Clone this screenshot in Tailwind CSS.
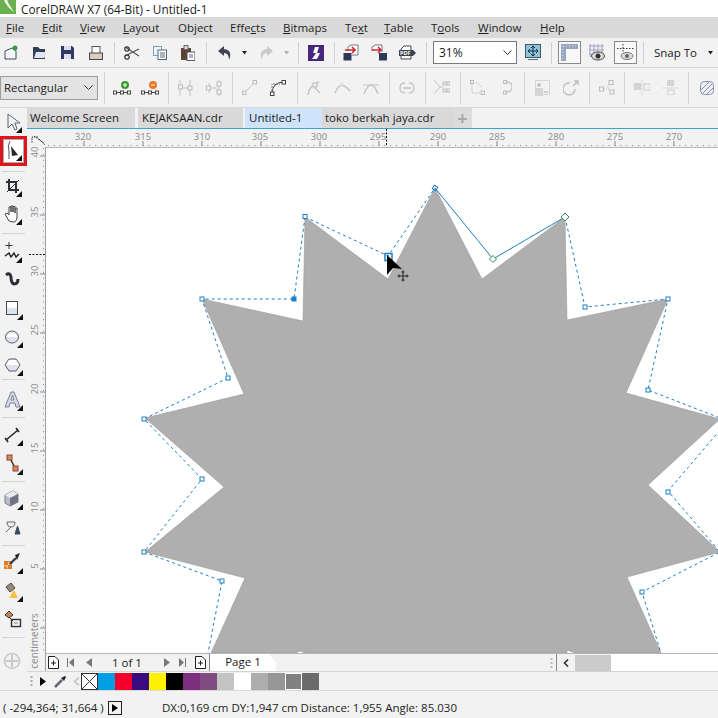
<!DOCTYPE html>
<html>
<head>
<meta charset="utf-8">
<title>CoreDRAW X7</title>
<script src="https://cdn.jsdelivr.net/npm/@tailwindcss/browser@4"></script>
</head>
<body class="m-0">
<div class="w-[718px] h-[718px] overflow-hidden flex flex-col bg-[#f2f2f2] text-[#1a1a1a] text-[11.5px] font-['Open_Sans',sans-serif]">

    <!-- Title bar -->
    <div class="h-[17px] shrink-0 bg-white flex items-center">
        <svg class="w-[16px] h-[14px] self-start" viewBox="0 0 16 14"><rect width="16" height="14" fill="#6ab04c"/><path d="M4 0 Q7 7 14 12 Q9 5 7 0Z" fill="#fff"/></svg>
        <span class="ml-[5px] text-[11.8px] leading-[14px]">CorelDRAW X7 (64-Bit) - Untitled-1</span>
    </div>

    <!-- Menu bar -->
    <div class="h-[21px] shrink-0 bg-[#d9d9d9] flex items-center pl-[6px] text-[11.5px] text-[#222]">
        <span class="w-[36px]"><u>F</u>ile</span>
        <span class="w-[38px]"><u>E</u>dit</span>
        <span class="w-[43px]"><u>V</u>iew</span>
        <span class="w-[55px]"><u>L</u>ayout</span>
        <span class="w-[52px]">Ob<u>j</u>ect</span>
        <span class="w-[53px]">Effe<u>c</u>ts</span>
        <span class="w-[62px]"><u>B</u>itmaps</span>
        <span class="w-[39px]">Te<u>x</u>t</span>
        <span class="w-[47px]"><u>T</u>able</span>
        <span class="w-[47px]">T<u>o</u>ols</span>
        <span class="w-[62px]"><u>W</u>indow</span>
        <span><u>H</u>elp</span>
    </div>

    <!-- Standard toolbar -->
    <div class="h-[30px] shrink-0 flex items-center border-b border-[#d4d4d4]">
        <svg class="ml-[4px] w-[14px] h-[16px]" viewBox="0 0 14 16"><path d="M1 6 L8 3 L12 6 V14 H1Z" fill="#f7f7f7" stroke="#3d4a5c"/><circle cx="11" cy="3" r="2.5" fill="#2e9e3e"/></svg>
        <svg class="ml-[14px] w-[15px] h-[14px]" viewBox="0 0 15 14"><path d="M1 1 H6 L8 3 H13 V13 H1Z" fill="#2f3f58"/><path d="M2 12 L4 6 H14.5 L12.5 12Z" fill="#dfe5ee"/></svg>
        <svg class="ml-[14px] w-[13px] h-[13px]" viewBox="0 0 13 13"><path d="M0 0 H11 L13 2 V13 H0Z" fill="#2c3a63"/><rect x="3" y="0" width="7" height="4" fill="#dde"/><rect x="3" y="8" width="7" height="5" fill="#dde"/></svg>
        <svg class="ml-[15px] w-[14px] h-[14px]" viewBox="0 0 14 14"><rect x="3" y="0.5" width="8" height="8" fill="#fff" stroke="#556"/><rect x="0.5" y="7" width="13" height="6.5" fill="#d8d0b8" stroke="#445"/></svg>
        <div class="ml-[11px] w-px h-[22px] bg-[#d0d0d0]"></div>
        <svg class="ml-[9px] w-[16px] h-[14px]" viewBox="0 0 16 14"><path d="M1 1 L15 10 M15 3 L1 10" stroke="#555" stroke-width="1.3" fill="none"/><circle cx="3" cy="3" r="2.2" fill="none" stroke="#333" stroke-width="1.2"/><circle cx="3" cy="11" r="2.2" fill="none" stroke="#333" stroke-width="1.2"/></svg>
        <svg class="ml-[13px] w-[14px] h-[14px]" viewBox="0 0 14 14"><rect x="0.5" y="0.5" width="8" height="9" fill="#eef3f7" stroke="#7fa0b8"/><rect x="5" y="4" width="8.5" height="9.5" fill="#fff" stroke="#4d6b80"/><path d="M7 7 H12 M7 9 H12 M7 11 H12" stroke="#667"/></svg>
        <svg class="ml-[14px] w-[14px] h-[16px]" viewBox="0 0 14 16"><rect x="0" y="3" width="10" height="12" fill="#5b4530"/><rect x="3" y="0.5" width="4" height="4" fill="#ddd" stroke="#666"/><rect x="6" y="7" width="8" height="8.5" fill="#fff" stroke="#556"/><path d="M8 10 H12 M8 12 H12" stroke="#667"/></svg>
        <div class="ml-[11px] w-px h-[22px] bg-[#d0d0d0]"></div>
        <svg class="ml-[10px] w-[16px] h-[16px]" viewBox="0 0 16 16"><path d="M7 1 L1 6 L7 11 V8 Q12 8 12 15 Q16 5 7 4Z" fill="#3d4551"/></svg>
        <svg class="ml-[9px] w-[5px] h-[4px]" viewBox="0 0 5 4"><path d="M0 0 H5 L2.5 3.5Z" fill="#222"/></svg>
        <svg class="ml-[11px] w-[16px] h-[16px]" viewBox="0 0 16 16"><path d="M9 1 L15 6 L9 11 V8 Q4 8 4 15 Q0 5 9 4Z" fill="#c9c9c9"/></svg>
        <svg class="ml-[10px] w-[5px] h-[4px]" viewBox="0 0 5 4"><path d="M0 0 H5 L2.5 3.5Z" fill="#aaa"/></svg>
        <div class="ml-[9px] w-px h-[22px] bg-[#d0d0d0]"></div>
        <svg class="ml-[9px] w-[16px] h-[16px]" viewBox="0 0 16 16"><rect width="16" height="16" fill="#47267e"/><path d="M11 2 H7 L5 8 H8 L4 14 H9 L12 8 H9Z" fill="#fff"/></svg>
        <div class="ml-[10px] w-px h-[22px] bg-[#d0d0d0]"></div>
        <svg class="ml-[8px] w-[17px] h-[17px]" viewBox="0 0 17 17"><path d="M5 7 V3 L8 1 H15 V11 H9" fill="#fff" stroke="#778"/><rect x="0.5" y="9" width="8" height="7.5" fill="#2d3a55"/><path d="M2 6 H12 M9 3 L12 6 L9 9" stroke="#d2232a" stroke-width="1.6" fill="none"/></svg>
        <svg class="ml-[11px] w-[17px] h-[17px]" viewBox="0 0 17 17"><path d="M1 7 V3 L4 1 H11 V8" fill="#fff" stroke="#778"/><path d="M1 6 H10 M7 3 L10 6 L7 9" stroke="#d2232a" stroke-width="1.6" fill="none"/><rect x="8" y="9" width="8" height="7.5" fill="#2d3a55"/></svg>
        <svg class="ml-[11px] w-[17px] h-[15px]" viewBox="0 0 17 15"><path d="M2 4 L5 1 H12 V14 H2Z" fill="#fff" stroke="#445"/><rect x="0" y="5" width="14" height="6" fill="#39434f"/><path d="M14 5 L17 8 L14 11Z" fill="#39434f"/><text x="1" y="10" font-size="5.5" fill="#fff" font-weight="700">PDF</text></svg>
        <div class="ml-[10px] w-px h-[22px] bg-[#d0d0d0]"></div>
        <div class="ml-[6px] w-[84px] h-[23px] bg-white border border-[#7a7a7a] flex items-center justify-between pl-[5px] pr-[4px] text-[12px]">
            31%
            <svg class="w-[9px] h-[5px]" viewBox="0 0 9 5"><path d="M0.5 0.5 L4.5 4.5 L8.5 0.5" fill="none" stroke="#333"/></svg>
        </div>
        <svg class="ml-[8px] w-[16px] h-[17px]" viewBox="0 0 16 17"><rect x="0.5" y="0.5" width="15" height="13" fill="#8ec3d8" stroke="#456"/><path d="M8 2 V12 M3 7 H13 M8 2 L6 4 M8 2 L10 4 M8 12 L6 10 M8 12 L10 10 M3 7 L5 5 M3 7 L5 9 M13 7 L11 5 M13 7 L11 9" stroke="#12304a" fill="none"/><rect x="3" y="15" width="10" height="1" fill="#667"/></svg>
        <div class="ml-[10px] w-px h-[22px] bg-[#d0d0d0]"></div>
        <div class="ml-[6px] w-[23px] h-[23px] border border-[#8a8a8a] bg-[#f8f8f8] flex items-center justify-center">
            <svg class="w-[17px] h-[17px]" viewBox="0 0 17 17"><path d="M0 0 H17 V5 H5 V17 H0Z" fill="#97a6c0"/><path d="M2 2 H15 M2 2 V15" stroke="#e8ecf3" stroke-dasharray="1 2"/></svg>
        </div>
        <svg class="ml-[8px] w-[16px] h-[17px]" viewBox="0 0 16 17"><path d="M1 0 V13 M5 0 V13 M9 0 V13 M13 0 V13 M0 2 H15 M0 6 H15 M0 10 H15" stroke="#9aa3c0"/><ellipse cx="9" cy="12" rx="6.5" ry="4" fill="#ddd" stroke="#444"/><circle cx="9" cy="12" r="2.5" fill="#333"/></svg>
        <div class="ml-[9px] w-[23px] h-[23px] border border-[#8a8a8a] bg-[#f8f8f8] flex items-center justify-center">
            <svg class="w-[17px] h-[17px]" viewBox="0 0 17 17"><path d="M0 4.5 H17 M6 0 V10" stroke="#333" stroke-dasharray="1.5 1.5"/><ellipse cx="10" cy="12" rx="6" ry="3.5" fill="#ddd" stroke="#777"/><circle cx="10" cy="12" r="2" fill="#666"/></svg>
        </div>
        <div class="ml-[6px] w-px h-[22px] bg-[#d0d0d0]"></div>
        <span class="ml-[10px] w-[54px]">Snap To</span>
        <svg class="w-[5px] h-[4px]" viewBox="0 0 5 4"><path d="M0 0 H5 L2.5 3.5Z" fill="#222"/></svg>
    </div>

    <!-- Property bar -->
    <div class="h-[40px] shrink-0 flex items-center border-b border-[#d9d9d9]">
        <div class="w-[98px] h-[24px] bg-[#e3e3e3] border border-[#9c9c9c] flex items-center justify-between pl-[3px] pr-[4px]">
            Rectangular
            <svg class="w-[9px] h-[5px]" viewBox="0 0 9 5"><path d="M0.5 0.5 L4.5 4.5 L8.5 0.5" fill="none" stroke="#333"/></svg>
        </div>
        <div class="ml-[6px] w-px h-[32px] bg-[#d4d4d4]"></div>
        <svg class="ml-[8px] w-[18px] h-[16px]" viewBox="0 0 18 16"><circle cx="12" cy="5" r="4" fill="#3b9b35"/><path d="M12 3 V7 M10 5 H14" stroke="#fff"/><path d="M3 12.5 H15" stroke="#444"/><rect x="0.5" y="11" width="3" height="3" fill="#fff" stroke="#444"/><rect x="7.5" y="11" width="3" height="3" fill="#fff" stroke="#444"/><rect x="14.5" y="11" width="3" height="3" fill="#fff" stroke="#444"/></svg>
        <svg class="ml-[10px] w-[18px] h-[16px]" viewBox="0 0 18 16"><circle cx="12" cy="5" r="4" fill="#e8792b"/><path d="M10 5 H14" stroke="#fff"/><path d="M3 12.5 H15" stroke="#444"/><rect x="0.5" y="11" width="3" height="3" fill="#fff" stroke="#444"/><rect x="7.5" y="11" width="3" height="3" fill="#fff" stroke="#444"/><rect x="14.5" y="11" width="3" height="3" fill="#fff" stroke="#444"/></svg>
        <div class="ml-[9px] w-px h-[32px] bg-[#d4d4d4]"></div>
        <svg class="ml-[9px] w-[16px] h-[16px]" viewBox="0 0 16 16"><path d="M2 0 V16 M12 0 V16 M4 8 H10" stroke="#c4c4c4"/><rect x="0.5" y="5" width="4" height="4" fill="#f2f2f2" stroke="#bbb"/><rect x="10" y="6" width="4" height="4" fill="#f2f2f2" stroke="#bbb"/></svg>
        <svg class="ml-[12px] w-[16px] h-[16px]" viewBox="0 0 16 16"><path d="M3 3 V13 M13 0 V16 M5 8 H11" stroke="#c4c4c4"/><rect x="0.5" y="6" width="4" height="4" fill="#f2f2f2" stroke="#bbb"/><rect x="11" y="2" width="4" height="4" fill="#f2f2f2" stroke="#bbb"/><rect x="11" y="10" width="4" height="4" fill="#f2f2f2" stroke="#bbb"/></svg>
        <div class="ml-[10px] w-px h-[32px] bg-[#d4d4d4]"></div>
        <svg class="ml-[9px] w-[15px] h-[15px]" viewBox="0 0 15 15"><path d="M2 13 L13 2" stroke="#c4c4c4"/><rect x="0.5" y="11" width="3.5" height="3.5" fill="#f2f2f2" stroke="#bbb"/><rect x="11" y="0.5" width="3.5" height="3.5" fill="#f2f2f2" stroke="#bbb"/></svg>
        <svg class="ml-[13px] w-[16px] h-[16px]" viewBox="0 0 16 16"><path d="M2 14 Q2 2 14 2" fill="none" stroke="#444"/><path d="M2 14 V4 M3 4 H10" stroke="#777" stroke-dasharray="2 1"/><rect x="0.5" y="12" width="3.5" height="3.5" fill="#fff" stroke="#444"/><rect x="12" y="0.5" width="3.5" height="3.5" fill="#fff" stroke="#444"/></svg>
        <div class="ml-[11px] w-px h-[32px] bg-[#d4d4d4]"></div>
        <svg class="ml-[8px] w-[17px] h-[15px]" viewBox="0 0 17 15"><path d="M2 15 Q3 5 13 2 M8 7 L14 13" fill="none" stroke="#c4c4c4" stroke-width="1.4"/><rect x="7" y="3" width="4" height="4" fill="#f2f2f2" stroke="#bbb"/></svg>
        <svg class="ml-[11px] w-[17px] h-[12px]" viewBox="0 0 17 12"><path d="M1 11 Q6 -3 16 9" fill="none" stroke="#c4c4c4" stroke-width="1.4"/><rect x="6" y="1" width="3" height="3" fill="#ddd"/></svg>
        <svg class="ml-[12px] w-[16px] h-[12px]" viewBox="0 0 16 12"><path d="M1 12 Q8 -6 15 12" fill="none" stroke="#c4c4c4" stroke-width="1.4"/><path d="M0 3 H16" stroke="#c4c4c4"/></svg>
        <div class="ml-[10px] w-px h-[32px] bg-[#d4d4d4]"></div>
        <svg class="ml-[9px] w-[16px] h-[12px]" viewBox="0 0 16 12"><path d="M6 1 Q1 1 1 6 Q1 11 6 11 M10 1 Q15 1 15 6 Q15 11 10 11 M4 6 H8 M12 6 H8" fill="none" stroke="#c4c4c4" stroke-width="1.3"/></svg>
        <div class="ml-[10px] w-px h-[32px] bg-[#d4d4d4]"></div>
        <svg class="ml-[8px] w-[16px] h-[15px]" viewBox="0 0 16 15"><path d="M0 0 L6 7 L0 14 M6 7 H9" fill="none" stroke="#c4c4c4"/><rect x="9" y="2" width="3" height="3" fill="#f2f2f2" stroke="#bbb"/><rect x="13" y="2" width="3" height="3" fill="#f2f2f2" stroke="#bbb"/><rect x="9" y="9" width="3" height="3" fill="#f2f2f2" stroke="#bbb"/><rect x="13" y="9" width="3" height="3" fill="#f2f2f2" stroke="#bbb"/></svg>
        <div class="ml-[10px] w-px h-[32px] bg-[#d4d4d4]"></div>
        <svg class="ml-[9px] w-[15px] h-[15px]" viewBox="0 0 15 15"><rect x="0.5" y="0.5" width="3" height="3" fill="#f2f2f2" stroke="#bbb"/><rect x="11" y="11" width="3.5" height="3.5" fill="#f2f2f2" stroke="#bbb"/><path d="M2 4 V13 H11 M6 2 L12 7" fill="none" stroke="#c4c4c4" stroke-dasharray="2 1"/></svg>
        <svg class="ml-[18px] w-[9px] h-[15px]" viewBox="0 0 9 15"><rect x="0.5" y="0.5" width="3" height="3" fill="#f2f2f2" stroke="#bbb"/><rect x="0.5" y="11" width="3" height="3" fill="#f2f2f2" stroke="#bbb"/><path d="M3 2 Q9 2 9 7 Q9 12 3 12" fill="none" stroke="#c4c4c4" stroke-width="1.3"/></svg>
        <div class="ml-[12px] w-px h-[32px] bg-[#d4d4d4]"></div>
        <svg class="ml-[10px] w-[15px] h-[16px]" viewBox="0 0 15 16"><rect x="0.5" y="0.5" width="14" height="14" fill="none" stroke="#bbb" stroke-dasharray="1 1"/><rect x="0" y="8" width="8" height="8" fill="#d4d4d4"/><path d="M4 3 V7 M2 5 H6 M9 12 H13" stroke="#aaa"/></svg>
        <svg class="ml-[13px] w-[16px] h-[16px]" viewBox="0 0 16 16"><path d="M12 9 A6 6 0 1 1 7 3" fill="none" stroke="#c4c4c4" stroke-width="1.6"/><path d="M10 6 L15 1 M11 1 H15 V5" fill="none" stroke="#bbb" stroke-width="1.3"/></svg>
        <div class="ml-[10px] w-px h-[32px] bg-[#d4d4d4]"></div>
        <svg class="ml-[9px] w-[16px] h-[15px]" viewBox="0 0 16 15"><rect x="0.5" y="7" width="4" height="4" fill="#f2f2f2" stroke="#bbb"/><rect x="10" y="0.5" width="4" height="4" fill="#f2f2f2" stroke="#bbb"/><rect x="11" y="10" width="4" height="4" fill="#f2f2f2" stroke="#bbb"/><path d="M5 9 H10 M9 5 V9" stroke="#c4c4c4" stroke-dasharray="1 1"/></svg>
        <div class="ml-[9px] w-px h-[32px] bg-[#d4d4d4]"></div>
        <svg class="ml-[9px] w-[16px] h-[15px]" viewBox="0 0 16 15"><rect x="0" y="3" width="7" height="7" fill="#d4d4d4"/><rect x="10" y="4" width="6" height="6" fill="#f2f2f2" stroke="#ccc"/><path d="M8 0 V15" stroke="#c4c4c4" stroke-dasharray="1 1"/></svg>
        <svg class="ml-[13px] w-[15px] h-[15px]" viewBox="0 0 15 15"><rect x="4" y="0" width="7" height="6" fill="#d4d4d4"/><rect x="5" y="10" width="6" height="5" fill="#f2f2f2" stroke="#ccc"/><path d="M0 8 H15" stroke="#c4c4c4" stroke-dasharray="1 1"/></svg>
        <div class="ml-[10px] w-px h-[32px] bg-[#d4d4d4]"></div>
        <svg class="ml-[11px] w-[14px] h-[14px]" viewBox="0 0 14 14"><rect x="0.5" y="0.5" width="13" height="13" rx="4" fill="#eef0f5" stroke="#8a90a8"/><path d="M1 9 L9 1 M3 12 L12 3 M7 13 L13 7" stroke="#8a90a8"/></svg>
    </div>

    <!-- Main area -->
    <div class="h-[582px] shrink-0 flex">

        <!-- Toolbox -->
        <div class="w-[27px] shrink-0 flex flex-col">
            <svg class="w-[26px] h-[28px] shrink-0" viewBox="0 0 26 28"><path d="M8 6 V20 L12 16 L15 22 L17 21 L15 15 H20Z" fill="#eef1f6" stroke="#5e6673"/><path d="M22 19 V25 H16Z" fill="#111"/></svg>
            <div class="w-[27px] h-[30px] shrink-0 border-[3px] border-[#e0141c] flex">
                <svg class="w-[21px] h-[24px] bg-white border border-[#aaa]" viewBox="0 0 19 22"><path d="M6 1 Q3 6 5 11 V19" fill="none" stroke="#555"/><path d="M7 6 L14 15 L8 16Z" fill="#26282c"/><path d="M18 15 V21 H12Z" fill="#111"/></svg>
            </div>
            <div class="h-[6px] shrink-0 flex items-end px-[2px]"><div class="w-full h-px bg-[#d4d4d4]"></div></div>
            <svg class="w-[26px] h-[28px] shrink-0" viewBox="0 0 26 28"><path d="M9 7 V18 H19 M6 10 H16 V21" fill="none" stroke="#2e3138" stroke-width="2"/><path d="M7 20 L19 8" stroke="#2e3138"/><path d="M22 19 V25 H16Z" fill="#111"/></svg>
            <svg class="w-[26px] h-[28px] shrink-0" viewBox="0 0 26 28"><path d="M9 21 L5 14 L7 13 L9 15 V7 H11 V12 V6 H13 V12 V6.5 H15 V13 V8 H17 V17 Q17 22 13 22Z" fill="#fff" stroke="#444"/><path d="M22 19 V25 H16Z" fill="#111"/></svg>
            <div class="h-[10px] shrink-0 flex items-center px-[2px]"><div class="w-full h-px bg-[#d4d4d4]"></div></div>
            <svg class="w-[26px] h-[28px] shrink-0" viewBox="0 0 26 28"><path d="M9 4 V11 M5.5 7.5 H12.5" stroke="#333"/><path d="M5 18 L9 15 L11 19 L14 15 L16 19 L19 16" fill="none" stroke="#222" stroke-width="1.4"/><path d="M22 19 V25 H16Z" fill="#111"/></svg>
            <svg class="w-[26px] h-[28px] shrink-0" viewBox="0 0 26 28"><path d="M6 9 Q10 6 11 11 Q11 17 14 18 Q18 18 18 13" fill="none" stroke="#2d2d33" stroke-width="3"/></svg>
            <svg class="w-[26px] h-[29px] shrink-0" viewBox="0 0 26 29"><rect x="6.5" y="7.5" width="11" height="13" fill="#dfe1ec" stroke="#444a55"/><rect x="7" y="8" width="10" height="6" fill="#fff"/><path d="M23 20 V26 H17Z" fill="#111"/></svg>
            <svg class="w-[26px] h-[28px] shrink-0" viewBox="0 0 26 28"><ellipse cx="12" cy="14" rx="6.5" ry="6" fill="#dfe1ec" stroke="#5a606c"/><path d="M6 14 A6.5 6 0 0 1 18 14Z" fill="#fff"/><path d="M23 19 V25 H17Z" fill="#111"/></svg>
            <svg class="w-[26px] h-[28px] shrink-0" viewBox="0 0 26 28"><path d="M9 8 H16 L20 14 L16 20 H9 L5 14Z" fill="#dfe1ec" stroke="#5a606c"/><path d="M6 14 L9 9 H16 L19 14Z" fill="#fff"/><path d="M23 19 V25 H17Z" fill="#111"/></svg>
            <div class="h-[7px] shrink-0 flex items-start px-[2px]"><div class="w-full h-px bg-[#d4d4d4]"></div></div>
            <svg class="w-[26px] h-[28px] shrink-0" viewBox="0 0 26 28"><path d="M5 21 L11 6 H14 L20 21 H16 L15 17 H10 L9 21Z M11 14 H14 L12.5 9Z" fill="#d7dae6" stroke="#7a8296"/><path d="M23 19 V25 H17Z" fill="#111"/></svg>
            <div class="h-[7px] shrink-0 flex items-center px-[2px]"><div class="w-full h-px bg-[#d4d4d4]"></div></div>
            <svg class="w-[26px] h-[28px] shrink-0" viewBox="0 0 26 28"><path d="M6 19 L18 9" stroke="#23262c" stroke-width="1.6"/><path d="M5 17 L8 21 M16 7 L19 11" stroke="#23262c" stroke-width="1.6"/><path d="M23 19 V25 H17Z" fill="#111"/></svg>
            <svg class="w-[26px] h-[29px] shrink-0" viewBox="0 0 26 29"><path d="M10 9 L15 19" stroke="#333" stroke-width="1.5"/><rect x="7" y="6" width="5" height="5" fill="#e08a36" stroke="#845"/><rect x="13" y="17" width="5" height="5" fill="#e08a36" stroke="#845"/><path d="M23 20 V26 H17Z" fill="#111"/></svg>
            <div class="h-[7px] shrink-0 flex items-center px-[2px]"><div class="w-full h-px bg-[#d4d4d4]"></div></div>
            <svg class="w-[26px] h-[28px] shrink-0" viewBox="0 0 26 28"><path d="M5 10 L13 6 L18 9 V17 L10 21 L5 18Z" fill="#b6bcc9" stroke="#7b818e"/><path d="M5 10 L10 13 L18 9 L13 6Z" fill="#e9ebf0"/><path d="M10 13 V21 L18 17 V9Z" fill="#6e7484"/><path d="M23 19 V25 H17Z" fill="#111"/></svg>
            <svg class="w-[26px] h-[28px] shrink-0" viewBox="0 0 26 28"><path d="M7 9 H15 Q15 14 11 14 Q7 14 7 9Z M11 14 L6 19" fill="#eee" stroke="#667"/><path d="M15 21 L17.5 13 L20 21Z" fill="#3d4a66" stroke="#3d4a66"/></svg>
            <div class="h-[8px] shrink-0 flex items-center px-[2px]"><div class="w-full h-px bg-[#d4d4d4]"></div></div>
            <svg class="w-[26px] h-[28px] shrink-0" viewBox="0 0 26 28"><rect x="4" y="12" width="8" height="8" fill="#e07b28"/><path d="M4 16 H8 V20 M8 12 V16 H12" fill="#f4c08a"/><path d="M10 15 L16 9" stroke="#3a3f4a" stroke-width="2.4"/><path d="M15 6 L20 4 L17 11Z" fill="#23262c"/><path d="M23 19 V25 H17Z" fill="#111"/></svg>
            <svg class="w-[26px] h-[28px] shrink-0" viewBox="0 0 26 28"><path d="M6 10 L11 6 L15 11 L10 15Z" fill="#9d8a6e" stroke="#445"/><path d="M9 21 L14 13 L18 21Z" fill="#f0c24a"/><path d="M23 19 V25 H17Z" fill="#111"/></svg>
            <svg class="w-[26px] h-[28px] shrink-0" viewBox="0 0 26 28"><path d="M5 10 L9 6 L13 10 L9 13Z" fill="#c28a4a" stroke="#334"/><path d="M9 12 L13 16" stroke="#334"/><rect x="11.5" y="14.5" width="9" height="7" fill="none" stroke="#333" stroke-width="1.4"/><rect x="14" y="17" width="4" height="2" fill="#bbb"/></svg>
            <div class="h-[8px] shrink-0 flex items-center px-[2px]"><div class="w-full h-px bg-[#d4d4d4]"></div></div>
            <svg class="mt-[6px] w-[26px] h-[28px] shrink-0" viewBox="0 0 26 28"><circle cx="12" cy="14" r="7.5" fill="none" stroke="#c8c8c8" stroke-width="1.6"/><path d="M12 8 V20 M6 14 H18" stroke="#c8c8c8" stroke-width="2"/></svg>
        </div>

        <!-- Document area -->
        <div class="w-[691px] shrink-0 flex flex-col">

            <!-- Document tabs -->
            <div class="h-[20px] shrink-0 flex leading-[20px]">
                <div class="w-[108px] bg-[#d9d9d9] pl-[3px]">Welcome Screen</div>
                <div class="ml-[3px] w-[105px] bg-[#d9d9d9] pl-[4px]">KEJAKSAAN.cdr</div>
                <div class="ml-[2px] w-[77px] bg-[#cfe3fa] pl-[4px]">Untitled-1</div>
                <div class="w-[131px] bg-[#d9d9d9] pl-[3px]">toko berkah jaya.cdr</div>
                <div class="w-[19px] bg-[#dcdcdc] flex items-center justify-center text-[#a8a8a8] text-[18px] font-bold leading-none">+</div>
            </div>
            <div class="h-px shrink-0 bg-[#36a6cf]"></div>

            <!-- Horizontal ruler -->
            <svg class="w-[691px] h-[18px] shrink-0" viewBox="27 129 691 18">
                <path d="M34 136 L44 143 M38 137 H32 V143 M39 139 L45 145" fill="none" stroke="#333" stroke-dasharray="1.5 1"/>
                <g font-size="9.5" fill="#8a8a8a" text-anchor="middle">
                    <text x="83" y="140">320</text><text x="143" y="140">315</text><text x="202" y="140">310</text><text x="260" y="140">305</text><text x="319" y="140">300</text>
                    <text x="378" y="140">295</text><text x="438" y="140">290</text><text x="497" y="140">285</text><text x="556" y="140">280</text><text x="615" y="140">275</text><text x="674" y="140">270</text>
                </g>
                <path d="M48 145.5 H718" stroke="#888" stroke-dasharray="1 4.9"/>
                <path d="M84 141 V146 M143 141 V146 M202 141 V146 M261 141 V146 M320 141 V146 M379 141 V146 M438 141 V146 M497 141 V146 M556 141 V146 M615 141 V146 M674 141 V146" stroke="#888"/>
                <path d="M386.5 129 V146" stroke="#111" stroke-dasharray="2 1.5"/>
            </svg>

            <div class="h-[524px] shrink-0 flex">
                <!-- Vertical ruler -->
                <svg class="w-[19px] h-[524px] shrink-0" viewBox="27 147 19 524">
                    <g font-size="9.5" fill="#8a8a8a" text-anchor="middle">
                        <text transform="translate(38 152) rotate(-90)">40</text><text transform="translate(38 212) rotate(-90)">35</text><text transform="translate(38 271) rotate(-90)">30</text>
                        <text transform="translate(38 330) rotate(-90)">25</text><text transform="translate(38 389) rotate(-90)">20</text><text transform="translate(38 448) rotate(-90)">15</text>
                        <text transform="translate(38 507) rotate(-90)">10</text><text transform="translate(38 566) rotate(-90)">5</text>
                        <text transform="translate(38 641) rotate(-90)" font-size="10">centimeters</text>
                    </g>
                    <path d="M43.5 148 V653" stroke="#888" stroke-dasharray="1 4.9"/>
                    <path d="M40 156 H45 M40 215 H45 M40 274 H45 M40 333 H45 M40 392 H45 M40 451 H45 M40 510 H45 M40 569 H45 M40 628 H45" stroke="#888"/>
                    <path d="M29 254.5 H45" stroke="#111" stroke-dasharray="2 1.5"/>
                    <path d="M45.5 147 V671" stroke="#a0a0a0"/>
                </svg>

                <div class="w-[672px] shrink-0 flex flex-col">
                    <!-- Canvas with the star and its control handles -->
                    <svg class="w-[672px] h-[506px] shrink-0 bg-white" viewBox="46 147 672 506">
                        <path d="M46 147.5 H718" stroke="#b5b5b5"/>
                        <polygon fill="#b0afb0" stroke="#9b9b9b" stroke-width="0.6" points="435,188 482,279 565,217 567,320 668,299 626,393 720,419 648,485 720,552 627,577 661,653 575,653 567,650 567,653 305,653 300,651 296,653 211,653 245,578 145,552 224,487 145,418 244,394 202,299 303,321 305,217 388,279"/>
                        <g fill="none" stroke="#1f7fc4" stroke-width="1">
                            <path stroke-dasharray="3 3" d="M305 217 L294 299 L202 299 L228 378 L144 419 L202 479 L144 552 L222 581 L208 653"/>
                            <path stroke-dasharray="3 3" d="M305 217 L388 256 L435 188"/>
                            <path d="M435 188 L493 259 L565 217"/>
                            <path stroke-dasharray="3 3" d="M565 217 L585 307 L668 299 L648 390 L720 418"/>
                            <path stroke-dasharray="3 3" d="M720 430 L668 491 L720 552 L642 592 L661 653"/>
                            <rect x="303" y="214.5" width="4" height="4" fill="#fff"/>
                            <rect x="292" y="297" width="4" height="4" fill="#1f7fc4"/>
                            <rect x="200" y="297" width="4" height="4" fill="#fff"/>
                            <rect x="226" y="376" width="4" height="4" fill="#fff"/>
                            <rect x="142" y="417" width="4" height="4" fill="#fff"/>
                            <rect x="200" y="477" width="4" height="4" fill="#fff"/>
                            <rect x="142" y="550" width="4" height="4" fill="#fff"/>
                            <rect x="220" y="579" width="4" height="4" fill="#fff"/>
                            <rect x="583" y="305" width="4" height="4" fill="#fff"/>
                            <rect x="666" y="297" width="4" height="4" fill="#fff"/>
                            <rect x="646" y="388" width="4" height="4" fill="#fff"/>
                            <rect x="666" y="490" width="4" height="4" fill="#fff"/>
                            <rect x="640" y="590" width="4" height="4" fill="#fff"/>
                            <rect x="433" y="186" width="4" height="4" fill="none" transform="rotate(30 435 188)"/>
                            <rect x="385" y="253.5" width="7" height="7" stroke-width="1.5"/>
                        </g>
                        <path d="M493 255.5 L496.5 259 L493 262.5 L489.5 259Z M565 213 L569 217 L565 221 L561 217Z" fill="#fff" stroke="#3b8f4e"/>
                        <polygon points="387,255 402,269 393,268 387,275" fill="#000"/>
                        <path d="M403 270.5 V281.5 M397.5 276 H408.5 M401.5 272 H404.5 M401.5 280 H404.5 M399 274.5 V277.5 M407 274.5 V277.5" stroke="#222"/>
                    </svg>

                    <!-- Page navigator and horizontal scrollbar -->
                    <div class="h-[18px] shrink-0 flex items-center border-t border-[#b5b5b5]">
                        <svg class="ml-[2px] w-[11px] h-[13px]" viewBox="0 0 11 13"><path d="M0.5 0.5 H7 L10.5 4 V12.5 H0.5Z M3 7 H8 M5.5 4.5 V9.5" fill="#fff" stroke="#222"/></svg>
                        <svg class="ml-[8px] w-[7px] h-[9px]" viewBox="0 0 7 9"><path d="M0.5 0 V9" stroke="#777"/><path d="M7 0 V9 L2 4.5Z" fill="#777"/></svg>
                        <svg class="ml-[12px] w-[6px] h-[9px]" viewBox="0 0 6 9"><path d="M6 0 V9 L0 4.5Z" fill="#777"/></svg>
                        <span class="ml-[20px] w-[52px]">1 of 1</span>
                        <svg class="w-[6px] h-[9px]" viewBox="0 0 6 9"><path d="M0 0 V9 L6 4.5Z" fill="#777"/></svg>
                        <svg class="ml-[9px] w-[7px] h-[9px]" viewBox="0 0 7 9"><path d="M6.5 0 V9" stroke="#777"/><path d="M0 0 V9 L5 4.5Z" fill="#777"/></svg>
                        <svg class="ml-[9px] w-[11px] h-[13px]" viewBox="0 0 11 13"><path d="M0.5 0.5 H7 L10.5 4 V12.5 H0.5Z M3 7 H8 M5.5 4.5 V9.5" fill="#fff" stroke="#222"/></svg>
                        <div class="ml-[3px] w-px h-[17px] bg-[#888]"></div>
                        <div class="w-[66px] h-[17px] bg-white text-center leading-[15px] [clip-path:polygon(0_0,90%_0,100%_55%,100%_100%,0_100%)]">Page 1</div>
                        <div class="w-[281px] h-[17px] flex justify-end items-center">
                            <svg class="w-[3px] h-[12px]" viewBox="0 0 3 12"><path d="M1.5 1 V11" stroke="#bbb" stroke-width="2" stroke-dasharray="2 2"/></svg>
                            <div class="ml-[3px] w-px h-[17px] bg-[#888]"></div>
                        </div>
                        <div class="w-[18px] flex items-center justify-center">
                            <svg class="w-[6px] h-[8px]" viewBox="0 0 6 8"><path d="M5 0.5 L1.5 4 L5 7.5" fill="none" stroke="#333" stroke-width="1.6"/></svg>
                        </div>
                        <div class="w-[36px] h-[16px] bg-[#cbcbcb]"></div>
                        <div class="flex-1 h-[17px] bg-white"></div>
                    </div>
                </div>
            </div>

            <!-- Colour palette -->
            <div class="h-[19px] shrink-0 flex items-center border-t border-[#d4d4d4]">
                <svg class="ml-[3px] w-[3px] h-[11px]" viewBox="0 0 3 11"><path d="M1.5 0 V11" stroke="#aaa" stroke-width="2" stroke-dasharray="2 2"/></svg>
                <svg class="ml-[7px] w-[6px] h-[9px]" viewBox="0 0 6 9"><path d="M0 0 V9 L6 4.5Z" fill="#000"/></svg>
                <svg class="ml-[8px] w-[13px] h-[13px]" viewBox="0 0 13 13"><path d="M1 12 L8 5" stroke="#667" stroke-width="2.5"/><path d="M7 3 L11 1 L12 2 L10 6Z" fill="#23262c"/></svg>
                <svg class="ml-[6px] w-[7px] h-[9px]" viewBox="0 0 7 9"><path d="M6 0.5 L1.5 4.5 L6 8.5" fill="none" stroke="#c8c8c8" stroke-width="1.8"/></svg>
                <svg class="ml-[1px] w-[17px] h-[17px] bg-white border border-[#333]" viewBox="0 0 15 15"><path d="M0 0 L15 15 M15 0 L0 15" stroke="#333"/></svg>
                <div class="w-[17px] h-[17px] bg-[#009fe3]"></div>
                <div class="w-[17px] h-[17px] bg-[#f5002b]"></div>
                <div class="w-[17px] h-[17px] bg-[#3a0a80]"></div>
                <div class="w-[17px] h-[17px] bg-[#fff200]"></div>
                <div class="w-[17px] h-[17px] bg-black"></div>
                <div class="w-[17px] h-[17px] bg-[#7f2f80]"></div>
                <div class="w-[17px] h-[17px] bg-[#7f4c7f]"></div>
                <div class="w-[17px] h-[17px] bg-[#c4c4c4]"></div>
                <div class="w-[17px] h-[17px] bg-white"></div>
                <div class="w-[17px] h-[17px] bg-[#adadad]"></div>
                <div class="w-[17px] h-[17px] bg-[#969696]"></div>
                <div class="w-[17px] h-[17px] bg-[#808080] border border-white"></div>
                <div class="w-[17px] h-[17px] bg-[#6b6b6b]"></div>
            </div>
        </div>
    </div>

    <!-- Status bar -->
    <div class="flex-1 flex items-center pl-[3px] pt-[6px] border-t border-[#d9d9d9] text-[#222]">
        <span class="w-[105px]">( -294,364; 31,664 )</span>
        <div class="w-[14px] h-[14px] border border-[#222] flex items-center justify-center">
            <svg class="w-[6px] h-[8px]" viewBox="0 0 6 8"><path d="M0 0 V8 L6 4Z" fill="#000"/></svg>
        </div>
        <span class="ml-[40px]">DX:0,169 cm DY:1,947 cm Distance: 1,955 Angle: 85.030</span>
    </div>
</div>
</body>
</html>
